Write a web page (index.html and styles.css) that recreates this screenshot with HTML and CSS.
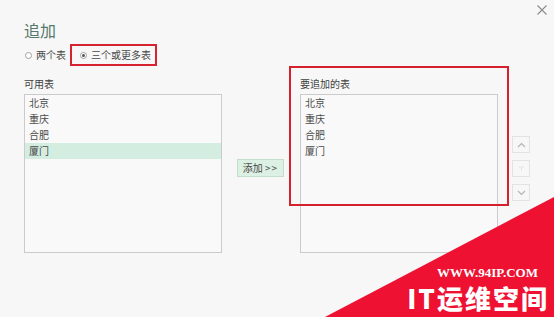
FILE: index.html
```html
<!DOCTYPE html>
<html lang="zh-CN">

<head>
    <meta charset="UTF-8">
    <meta name="viewport" content="width=device-width, initial-scale=1.0">
    <title>追加</title>
    <link rel="stylesheet" href="styles.css">
</head>

<body>
    <div class="dialog">
        <div class="head">
            <h1 class="title">追加</h1>
            <button class="close" title="关闭">
                <svg width="10" height="10" viewBox="0 0 10 10">
                    <path d="M0.5 0.5 L9.5 9.5 M9.5 0.5 L0.5 9.5" stroke="#8a8a8a" stroke-width="1.1" fill="none" />
                </svg>
            </button>
        </div>

        <div class="modes">
            <label class="opt"><span class="radio"></span>两个表</label>
            <label class="opt picked"><span class="radio on"></span>三个或更多表</label>
        </div>

        <div class="panes">
            <div class="pane">
                <div class="cap">可用表</div>
                <ul class="list">
                    <li>北京</li>
                    <li>重庆</li>
                    <li>合肥</li>
                    <li class="sel">厦门</li>
                </ul>
            </div>

            <div class="mid">
                <button class="add">添加 <span class="arrows">&gt;&gt;</span></button>
            </div>

            <div class="pane target">
                <div class="mark"></div>
                <div class="cap">要追加的表</div>
                <ul class="list">
                    <li>北京</li>
                    <li>重庆</li>
                    <li>合肥</li>
                    <li>厦门</li>
                </ul>
            </div>

            <div class="moves">
                <button class="move">
                    <svg width="9" height="6" viewBox="0 0 9 6"><path d="M1 5 L4.5 1.5 L8 5" stroke="#b4b4b4" stroke-width="1.2" fill="none" /></svg>
                </button>
                <button class="move">
                    <svg width="9" height="6" viewBox="0 0 9 6"><path d="M2 1 L7 1 M4.5 1 L4.5 5" stroke="#e4e4e4" stroke-width="1" fill="none" /></svg>
                </button>
                <button class="move">
                    <svg width="9" height="6" viewBox="0 0 9 6"><path d="M1 1 L4.5 4.5 L8 1" stroke="#b4b4b4" stroke-width="1.2" fill="none" /></svg>
                </button>
            </div>
        </div>
    </div>

    <div class="stamp">
        <div class="site">WWW.94IP.COM</div>
        <div class="brand">IT运维空间</div>
    </div>
</body>

</html>
```

FILE: styles.css
```css
html,
body {
    margin: 0;
    padding: 0;
}

body {
    width: 554px;
    height: 317px;
    overflow: hidden;
    position: relative;
    background-color: #f7f7f7;
    font-family: "Noto Sans CJK SC", "Noto Sans", sans-serif;
    font-size: 10px;
    color: #4a4a4a;
}

.dialog {
    padding-left: 24px;
}

.head {
    display: flex;
    justify-content: space-between;
    align-items: flex-start;
    height: 44px;
}

.title {
    margin: 0;
    padding-top: 20px;
    font-size: 16px;
    line-height: 20px;
    font-weight: normal;
    color: #56796a;
}

.close {
    margin: 5px 7px 0 0;
    padding: 0;
    width: 10px;
    height: 10px;
    border: none;
    background: none;
    display: flex;
}

.modes {
    display: flex;
    align-items: center;
    height: 22px;
}

.opt {
    display: flex;
    align-items: center;
    gap: 4px;
    height: 22px;
    box-sizing: border-box;
    line-height: 14px;
}

.opt:first-child {
    margin-left: 1px;
    margin-right: 4px;
}

.picked {
    border: 2px solid #d5232f;
    padding: 0 4px 0 8px;
}

.radio {
    width: 7px;
    height: 7px;
    box-sizing: border-box;
    border: 1px solid #a0a0a0;
    border-radius: 50%;
    background-color: #fff;
    display: flex;
    align-items: center;
    justify-content: center;
}

.radio.on::after {
    content: "";
    width: 3px;
    height: 3px;
    border-radius: 50%;
    background-color: #555;
}

.panes {
    display: flex;
    align-items: flex-start;
}

.pane {
    width: 198px;
    position: relative;
}

.cap {
    padding-top: 11px;
    margin-bottom: 3px;
    line-height: 14px;
    color: #404040;
}

.list {
    list-style: none;
    margin: 0;
    padding: 0;
    height: 159px;
    box-sizing: border-box;
    border: 1px solid #cbcbcb;
    background-color: #f9f9f9;
}

.list li {
    height: 16px;
    line-height: 16px;
    padding-left: 4px;
}

.list li.sel {
    background-color: #d3ede0;
}

.mid {
    width: 78px;
    padding-top: 93px;
}

.add {
    margin-left: 15px;
    width: 47px;
    height: 18px;
    padding: 0;
    border: 1px solid #c3dccc;
    background-color: #ddf0e4;
    font-family: inherit;
    font-size: 10px;
    color: #4a4a4a;
    line-height: 16px;
}

.arrows {
    letter-spacing: 1px;
}

.mark {
    position: absolute;
    left: -11px;
    top: 0;
    width: 220px;
    height: 140px;
    box-sizing: border-box;
    border: 2px solid #d5202d;
    pointer-events: none;
}

.moves {
    margin-left: 14px;
    padding-top: 70px;
    display: flex;
    flex-direction: column;
    gap: 7px;
}

.move {
    width: 18px;
    height: 17px;
    padding: 0;
    border: 1px solid #e3e3e3;
    background-color: #f7f7f7;
    display: flex;
    align-items: center;
    justify-content: center;
}

.stamp {
    position: absolute;
    right: 0;
    bottom: 0;
    width: 229px;
    height: 120px;
    box-sizing: border-box;
    background-color: #ee1132;
    clip-path: polygon(100% 0, 100% 100%, 0 100%);
    display: flex;
    flex-direction: column;
    align-items: flex-end;
    justify-content: flex-end;
    padding: 0 7px 6px 0;
    color: #fff;
}

.site {
    font-family: "Liberation Serif", "DejaVu Serif", serif;
    font-weight: bold;
    font-size: 13px;
    line-height: 14px;
    margin: 0 9px 5px 0;
}

.brand {
    font-family: "Noto Sans CJK SC", sans-serif;
    font-weight: 900;
    font-size: 26px;
    line-height: 26px;
    letter-spacing: 2px;
    margin-right: -2px;
}
```
